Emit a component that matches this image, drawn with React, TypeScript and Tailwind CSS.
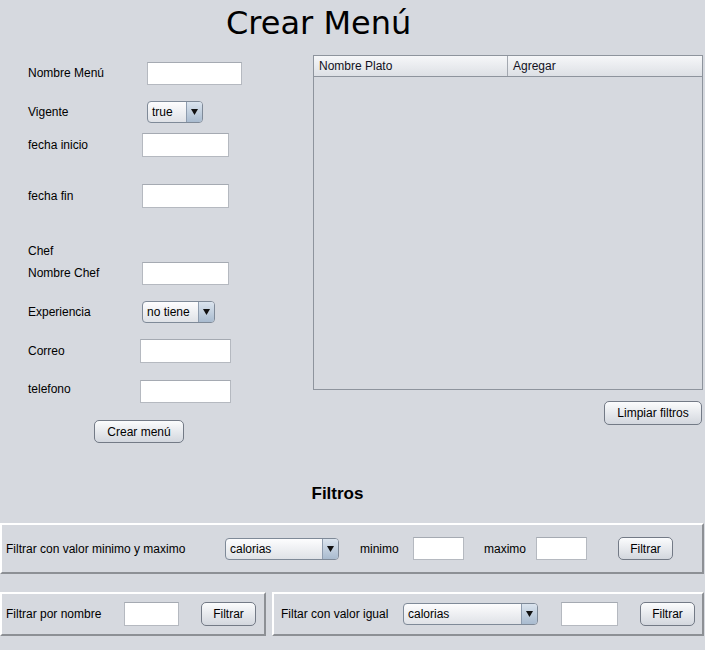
import React from 'react';

const font = { fontFamily: '"Liberation Sans", Arial, sans-serif' };

function Field({ w, h = 24 }: { w: number; h?: number }) {
  return (
    <div
      className="bg-white border border-[#b5b9c0] border-t-[#a5aab2] shrink-0"
      style={{ width: w, height: h }}
    />
  );
}

function Combo({ w, value }: { w: number; value: string }) {
  return (
    <div
      className="flex h-[22px] shrink-0 rounded-[4px] border border-[#7f8a98] overflow-hidden bg-gradient-to-b from-[#fdfdfe] to-[#dfe2e7]"
      style={{ width: w }}
    >
      <div className="flex-1 flex items-center pl-[4px] text-[12px] text-black">{value}</div>
      <div className="w-[16px] flex items-center justify-center border-l border-[#8e9cae] bg-gradient-to-b from-[#dbe4ee] to-[#a9bbcf]">
        <svg width="7" height="6" viewBox="0 0 7 6">
          <polygon points="0,0 7,0 3.5,6" fill="#111" />
        </svg>
      </div>
    </div>
  );
}

function Btn({ w, h = 24, children }: { w: number; h?: number; children: React.ReactNode }) {
  return (
    <div
      className="flex items-center justify-center shrink-0 rounded-[5px] border border-[#737a86] bg-gradient-to-b from-[#fbfcfd] to-[#d3d7de] text-[12px] text-black"
      style={{ width: w, height: h }}
    >
      {children}
    </div>
  );
}

function Row({ label, lw, mt, children, top }: { label: string; lw: number; mt: number; children: React.ReactNode; top?: boolean }) {
  return (
    <div className={`flex h-[24px] ${top ? 'items-start' : 'items-center'}`} style={{ marginTop: mt }}>
      <span className="pl-[28px] text-[12px] text-black shrink-0" style={{ width: lw }}>
        {label}
      </span>
      {children}
    </div>
  );
}

export default function App() {
  return (
    <div className="w-[705px] h-[650px] bg-[#d6d9df] overflow-hidden" style={font}>
      {/* titulo */}
      <div className="h-[46px] flex items-center pl-[226px]">
        <h1 className="leading-none text-black" style={{ fontFamily: '"DejaVu Sans", Tahoma, sans-serif', fontSize: 32 }}>
          Crear Menú
        </h1>
      </div>

      <div className="flex">
        {/* formulario */}
        <div className="w-[313px] flex flex-col">
          <Row label="Nombre Menú" lw={147} mt={15}>
            <Field w={95} h={23} />
          </Row>
          <Row label="Vigente" lw={147} mt={15}>
            <Combo w={56} value="true" />
          </Row>
          <Row label="fecha inicio" lw={142} mt={9}>
            <Field w={87} />
          </Row>
          <Row label="fecha fin" lw={142} mt={27}>
            <Field w={87} />
          </Row>
          <div className="mt-[36px] h-[14px] flex items-center pl-[28px] text-[12px] text-black">Chef</div>
          <Row label="Nombre Chef" lw={142} mt={3}>
            <Field w={87} h={23} />
          </Row>
          <Row label="Experiencia" lw={142} mt={15}>
            <Combo w={73} value="no tiene" />
          </Row>
          <Row label="Correo" lw={140} mt={15}>
            <Field w={91} />
          </Row>
          <Row label="telefono" lw={140} mt={17} top>
            <Field w={91} h={23} />
          </Row>
          <div className="mt-[16px] pl-[94px]">
            <Btn w={90} h={23}>Crear menú</Btn>
          </div>
        </div>

        {/* tabla platos */}
        <div className="flex flex-col">
          <div className="mt-[9px] w-[390px] h-[335px] border border-[#8e949d]">
            <div className="flex h-[21px] border-b border-[#8e949d] bg-gradient-to-b from-[#f6f7f9] to-[#dde0e5] text-[12px] text-[#111122]">
              <div className="w-[194px] pl-[5px] flex items-center border-r border-[#a3a8b0]">Nombre Plato</div>
              <div className="flex-1 pl-[5px] flex items-center">Agregar</div>
            </div>
          </div>
          <div className="mt-[11px] flex justify-end pr-[1px]">
            <Btn w={98}>Limpiar filtros</Btn>
          </div>
        </div>
      </div>

      <div className="mt-[41px] h-[20px] flex items-center justify-center">
        <span className="text-[17px] font-bold text-black mr-[30px]">Filtros</span>
      </div>

      {/* filtro min/max */}
      <div className="mt-[19px] w-[704px] h-[51px] border-2 border-t-white border-l-white border-b-[#8d9095] border-r-[#8d9095] flex items-center pl-[4px] text-[12px] text-black">
        <span className="w-[219px] shrink-0">Filtrar con valor minimo y maximo</span>
        <Combo w={114} value="calorias" />
        <span className="ml-[21px] w-[53px] shrink-0">minimo</span>
        <Field w={51} h={23} />
        <span className="ml-[20px] w-[52px] shrink-0">maximo</span>
        <Field w={51} h={23} />
        <div className="ml-[31px]">
          <Btn w={55} h={23}>Filtrar</Btn>
        </div>
      </div>

      <div className="mt-[18px] flex">
        {/* filtro nombre */}
        <div className="w-[266px] h-[44px] border-2 border-t-white border-l-white border-b-[#8d9095] border-r-[#8d9095] flex items-center pl-[4px] text-[12px] text-black">
          <span className="w-[118px] shrink-0">Filtrar por nombre</span>
          <Field w={55} />
          <div className="ml-[22px]">
            <Btn w={55}>Filtrar</Btn>
          </div>
        </div>
        {/* filtro igual */}
        <div className="ml-[6px] w-[432px] h-[44px] border-2 border-t-white border-l-white border-b-[#8d9095] border-r-[#8d9095] flex items-center pl-[7px] text-[12px] text-black">
          <span className="w-[122px] shrink-0">Filtar con valor igual</span>
          <Combo w={135} value="calorias" />
          <div className="ml-[23px]">
            <Field w={57} />
          </div>
          <div className="ml-[22px]">
            <Btn w={55}>Filtrar</Btn>
          </div>
        </div>
      </div>
    </div>
  );
}
